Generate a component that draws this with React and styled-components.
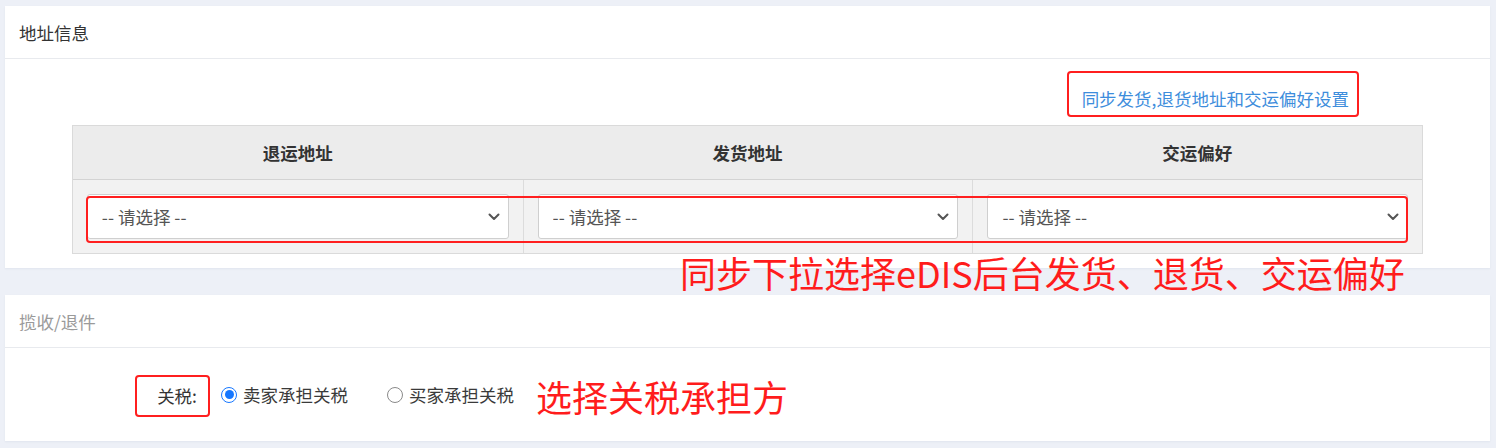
import React from 'react';
import styled, { createGlobalStyle } from 'styled-components';

const Global = createGlobalStyle`
  html, body { margin: 0; padding: 0; background: #edf0f7; }
  body { font-family: "Noto Sans CJK SC", "Noto Sans", sans-serif; }
  * { box-sizing: border-box; }
`;

const Page = styled.div`
  padding: 6px 6px 7px 5px;
  display: flex;
  flex-direction: column;
  gap: 27px;
`;

const Card = styled.section`
  position: relative;
  background: #fff;
  box-shadow: 0 1px 2px rgba(40, 60, 110, 0.06);
`;

const CardHeader = styled.div`
  height: 53px;
  border-bottom: 1px solid #e8eaee;
  display: flex;
  align-items: center;
  padding-left: 14px;
  font-size: 17.5px;
  color: ${(p) => (p.$muted ? '#9a9a9a' : '#333')};
`;

const AddressBody = styled.div`
  padding: 12px 0 14px;
  display: flex;
  flex-direction: column;
  gap: 8px;
`;

const LinkRow = styled.div`
  display: flex;
  justify-content: flex-end;
  padding-right: 131px;
`;

const Highlight = styled.div`
  border: 2px solid #ff1f1f;
  border-radius: 4px;
`;

const LinkBox = styled(Highlight)`
  height: 46px;
  display: flex;
  align-items: flex-end;
  padding: 0 8px 4px 13px;
`;

const SyncLink = styled.a`
  font-size: 17.5px;
  line-height: 24px;
  color: #3d8ddc;
  text-decoration: none;
  white-space: nowrap;
`;

const Table = styled.div`
  position: relative;
  width: 91%;
  margin: 0 auto;
  border: 1px solid #dadada;
`;

const Row = styled.div`
  display: grid;
  grid-template-columns: repeat(3, 1fr);
  background: ${(p) => (p.$head ? '#ececec' : '#f2f2f2')};
  border-bottom: ${(p) => (p.$head ? '1px solid #d3d3d3' : 'none')};
`;

const HeadCell = styled.div`
  height: 53px;
  display: flex;
  align-items: center;
  justify-content: center;
  font-size: 17.5px;
  font-weight: 700;
  color: #333;
`;

const Cell = styled.div`
  padding: 14px;
  border-left: ${(p) => (p.$first ? 'none' : '1px solid #dcdcdc')};
`;

const SelectWrap = styled.div`
  position: relative;
  height: 45px;
`;

const Select = styled.select`
  appearance: none;
  width: 100%;
  height: 45px;
  border: 1px solid #cfcfcf;
  border-radius: 3px;
  background: #fff;
  padding: 0 36px 0 14px;
  font-family: inherit;
  font-size: 17.5px;
  color: #555;
  outline: none;
`;

const Chevron = styled.svg`
  position: absolute;
  right: 9px;
  top: 50%;
  transform: translateY(-50%);
  pointer-events: none;
`;

const SelectMark = styled(Highlight)`
  position: absolute;
  left: 13px;
  right: 14px;
  top: 70px;
  height: 47px;
  pointer-events: none;
`;

const Note = styled.div`
  font-size: 36px;
  line-height: 40px;
  color: #ff1c1c;
  white-space: nowrap;
`;

const FloatingNote = styled(Note)`
  position: absolute;
  left: 675px;
  top: 246px;
  z-index: 2;
`;

const FormBody = styled.div`
  height: 93px;
  display: flex;
  align-items: center;
  padding-left: 130px;
`;

const LabelBox = styled(Highlight)`
  width: 75px;
  height: 42px;
  margin-top: 2px;
  display: flex;
  align-items: center;
  justify-content: flex-end;
  padding-right: 11px;
  font-size: 17.5px;
  color: #333;
`;

const RadioGroup = styled.div`
  display: flex;
  align-items: center;
  gap: 39px;
  margin-left: 11px;
`;

const RadioOption = styled.label`
  display: inline-flex;
  align-items: center;
  gap: 6px;
  font-size: 17.5px;
  color: #3a3a3a;
  white-space: nowrap;
`;

const RadioInput = styled.input`
  appearance: none;
  margin: 0;
  width: 16px;
  height: 16px;
  border-radius: 50%;
  border: 1px solid #8a8a8a;
  background: #fff;
  display: grid;
  place-items: center;
  &:checked {
    border-color: #1677ff;
  }
  &:checked::after {
    content: '';
    width: 9px;
    height: 9px;
    border-radius: 50%;
    background: #1677ff;
  }
`;

const InlineNote = styled(Note)`
  margin-left: 22px;
  margin-top: 2px;
`;

const columns = ['退运地址', '发货地址', '交运偏好'];

function ChevronIcon() {
  return (
    <Chevron width="12" height="8" viewBox="0 0 12 8">
      <path d="M1.5 1.5 L6 6 L10.5 1.5" fill="none" stroke="#555" strokeWidth="2" strokeLinecap="round" strokeLinejoin="round" />
    </Chevron>
  );
}

export default function App() {
  return (
    <>
      <Global />
      <Page>
        <Card>
          <CardHeader>地址信息</CardHeader>
          <AddressBody>
            <LinkRow>
              <LinkBox>
                <SyncLink href="#">同步发货,退货地址和交运偏好设置</SyncLink>
              </LinkBox>
            </LinkRow>
            <Table>
              <Row $head>
                {columns.map((c) => (
                  <HeadCell key={c}>{c}</HeadCell>
                ))}
              </Row>
              <Row>
                {columns.map((c, i) => (
                  <Cell key={c} $first={i === 0}>
                    <SelectWrap>
                      <Select defaultValue="">
                        <option value="">-- 请选择 --</option>
                      </Select>
                      <ChevronIcon />
                    </SelectWrap>
                  </Cell>
                ))}
              </Row>
              <SelectMark />
            </Table>
          </AddressBody>
          <FloatingNote>同步下拉选择eDIS后台发货、退货、交运偏好</FloatingNote>
        </Card>
        <Card>
          <CardHeader $muted>揽收/退件</CardHeader>
          <FormBody>
            <LabelBox>关税:</LabelBox>
            <RadioGroup>
              <RadioOption>
                <RadioInput type="radio" name="duty" defaultChecked />
                卖家承担关税
              </RadioOption>
              <RadioOption>
                <RadioInput type="radio" name="duty" />
                买家承担关税
              </RadioOption>
            </RadioGroup>
            <InlineNote>选择关税承担方</InlineNote>
          </FormBody>
        </Card>
      </Page>
    </>
  );
}
